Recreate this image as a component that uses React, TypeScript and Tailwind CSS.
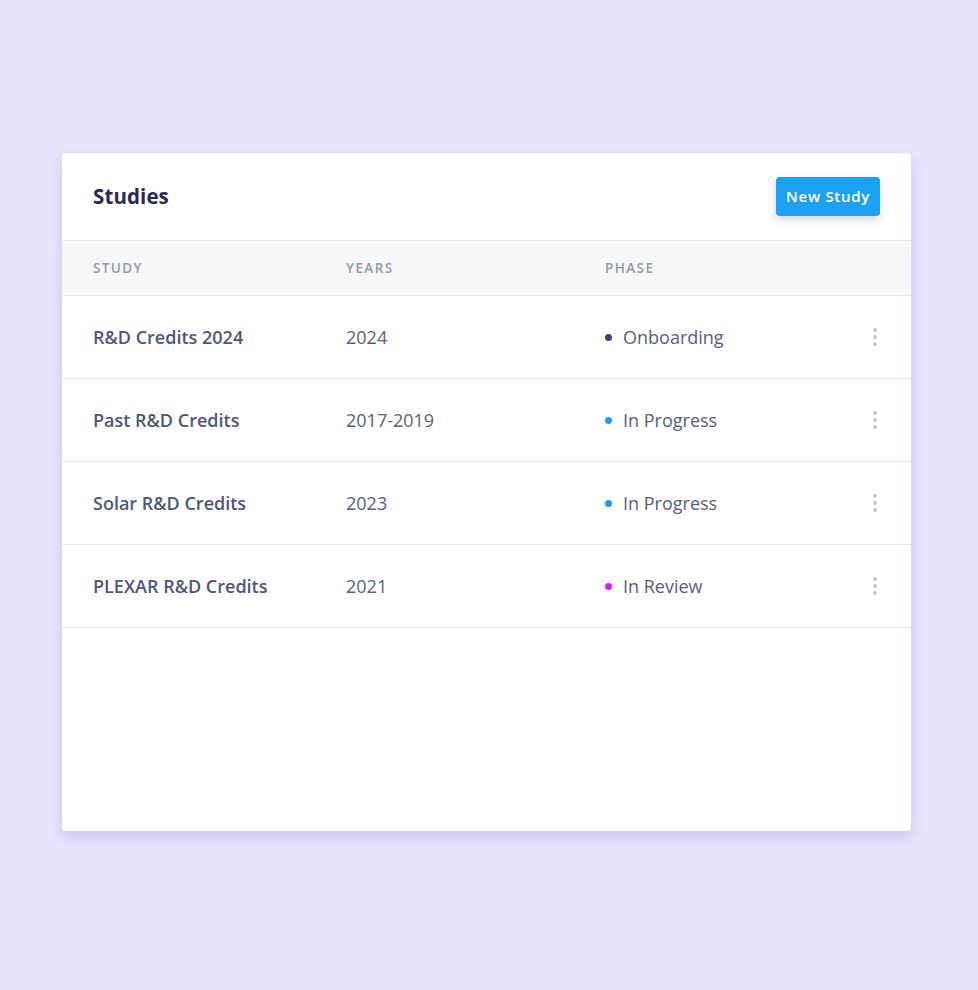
import React from 'react';

type Study = {
  name: string;
  years: string;
  phase: string;
  dot: string;
};

const studies: Study[] = [
  { name: 'R&D Credits 2024', years: '2024', phase: 'Onboarding', dot: 'bg-[#3b4668]' },
  { name: 'Past R&D Credits', years: '2017-2019', phase: 'In Progress', dot: 'bg-[#1f9cf0]' },
  { name: 'Solar R&D Credits', years: '2023', phase: 'In Progress', dot: 'bg-[#1f9cf0]' },
  { name: 'PLEXAR R&D Credits', years: '2021', phase: 'In Review', dot: 'bg-[#d81ff0]' },
];

function Kebab() {
  return (
    <button className="flex flex-col items-center gap-[3px] px-2 py-1">
      <span className="block w-[4px] h-[4px] rounded-full bg-[#c3c7cf]" />
      <span className="block w-[4px] h-[4px] rounded-full bg-[#c3c7cf]" />
      <span className="block w-[4px] h-[4px] rounded-full bg-[#c3c7cf]" />
    </button>
  );
}

export default function App() {
  return (
    <div
      className="min-h-[990px] bg-[#e9e3fd] pt-[153px] pl-[62px]"
      style={{ fontFamily: '"Open Sans", "Noto Sans", sans-serif' }}
    >
      <div className="w-[849px] h-[678px] bg-white rounded-[4px] shadow-[0_6px_14px_rgba(110,90,170,0.22)] overflow-hidden">
        {/* Header */}
        <div className="h-[88px] flex items-center justify-between pl-[31px] pr-[31px] border-b border-[#e6e9ee]">
          <h1 className="text-[20.5px] font-bold text-[#2c2858] tracking-[0.1px]">Studies</h1>
          <button className="h-[39px] px-[10px] rounded-[4px] bg-[#1da1f2] text-white text-[15px] font-semibold tracking-[0.7px] shadow-[0_4px_8px_rgba(30,60,110,0.2)]">
            New Study
          </button>
        </div>

        {/* Column labels */}
        <div className="h-[55px] flex items-center bg-[#f6f7f9] border-b border-[#e6e9ee] pl-[31px] text-[13.5px] font-semibold tracking-[1.4px] text-[#8e9bb0] uppercase">
          <div className="w-[253px]">Study</div>
          <div className="w-[259px]">Years</div>
          <div>Phase</div>
        </div>

        {/* Rows */}
        {studies.map((s) => (
          <div
            key={s.name}
            className="h-[83px] flex items-center border-b border-[#e6e9ee] pl-[31px] pr-[26px] text-[18px] text-[#56607e]"
          >
            <div className="w-[253px] font-semibold text-[#4d5779]">{s.name}</div>
            <div className="w-[259px]">{s.years}</div>
            <div className="flex-1 flex items-center gap-[11px]">
              <span className={`w-[7px] h-[7px] rounded-full ${s.dot}`} />
              <span>{s.phase}</span>
            </div>
            <Kebab />
          </div>
        ))}
      </div>
    </div>
  );
}
